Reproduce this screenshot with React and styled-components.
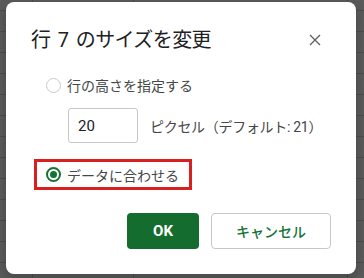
import React, { useState } from 'react';
import styled, { createGlobalStyle } from 'styled-components';

const GlobalStyle = createGlobalStyle`
  html, body {
    margin: 0;
    padding: 0;
  }
  body {
    width: 364px;
    height: 278px;
    overflow: hidden;
    background-color: #5b5b5b;
    background-image:
      linear-gradient(to right, transparent 32px, #4b4b4b 32px, #4b4b4b 33px, transparent 33px),
      linear-gradient(to right, transparent 133px, #4b4b4b 133px, #4b4b4b 134px, transparent 134px),
      linear-gradient(to right, transparent 347px, #4b4b4b 347px, #4b4b4b 348px, transparent 348px),
      repeating-linear-gradient(to bottom, transparent 0, transparent 10px, #4d4d4d 10px, #4d4d4d 11px, transparent 11px, transparent 21px);
    font-family: Roboto, "Noto Sans CJK JP", sans-serif;
  }
`;

const Page = styled.div`
  padding: 2px 8px 0 6px;
`;

const Dialog = styled.div`
  box-sizing: border-box;
  width: 350px;
  height: 272px;
  background: #fff;
  border-radius: 8px;
  padding: 24px 25px 25px 25px;
  display: flex;
  flex-direction: column;
  box-shadow: 0 4px 8px 3px rgba(0, 0, 0, 0.15);
`;

const Header = styled.div`
  display: flex;
  align-items: center;
  justify-content: space-between;
  height: 28px;
`;

const Title = styled.h2`
  margin: 0;
  font-size: 20px;
  font-weight: 400;
  line-height: 28px;
  letter-spacing: -0.6px;
  word-spacing: 3px;
  color: #202124;
  font-family: Roboto, "Noto Sans CJK JP", sans-serif;
`;

const CloseButton = styled.button`
  border: 0;
  background: none;
  padding: 0;
  margin-right: 8px;
  width: 16px;
  height: 16px;
  display: flex;
  align-items: center;
  justify-content: center;
  cursor: pointer;
`;

const Body = styled.div`
  display: flex;
  flex-direction: column;
  margin-top: 21px;
`;

const Option = styled.label`
  display: flex;
  align-items: center;
  gap: 6px;
  height: 20px;
  padding-left: 15px;
  font-size: 14px;
  color: #444746;
  cursor: pointer;
`;

const Highlight = styled.div`
  box-sizing: border-box;
  width: 158px;
  height: 31px;
  margin: 16px 0 0 3px;
  border: 3px solid #d9201f;
  display: flex;
  align-items: center;
  padding-left: 9px;

  & > label {
    padding-left: 0;
  }
`;

const Radio = styled.span`
  box-sizing: border-box;
  width: 15px;
  height: 15px;
  border-radius: 50%;
  border: ${(p) => (p.checked ? '2px solid #137333' : '1.5px solid #c9cbcc')};
  display: flex;
  align-items: center;
  justify-content: center;
  flex-shrink: 0;

  &::after {
    content: '';
    width: 7px;
    height: 7px;
    border-radius: 50%;
    background: #137333;
    display: ${(p) => (p.checked ? 'block' : 'none')};
  }
`;

const SizeRow = styled.div`
  display: flex;
  align-items: center;
  gap: 12px;
  margin: 13px 0 0 37px;
`;

const SizeInput = styled.input`
  box-sizing: border-box;
  width: 70px;
  height: 35px;
  border: 1px solid #c7c7c7;
  border-radius: 3px;
  padding: 0 9px;
  font-family: Roboto, "Noto Sans CJK JP", sans-serif;
  font-size: 15px;
  color: #202124;
  outline: none;
`;

const Hint = styled.span`
  font-size: 14px;
  color: #444746;
  letter-spacing: -0.3px;
`;

const Footer = styled.div`
  margin-top: auto;
  display: flex;
  justify-content: flex-end;
  gap: 12px;
`;

const Button = styled.button`
  box-sizing: border-box;
  height: 36px;
  width: ${(p) => p.width}px;
  border-radius: 4px;
  font-family: Roboto, "Noto Sans CJK JP", sans-serif;
  font-size: ${(p) => (p.primary ? '15px' : '14px')};
  font-weight: ${(p) => (p.primary ? 700 : 500)};
  cursor: pointer;
  border: ${(p) => (p.primary ? '0' : '1px solid #c7c7c7')};
  background: ${(p) => (p.primary ? '#146c2e' : '#fff')};
  color: ${(p) => (p.primary ? '#fff' : '#137333')};
`;

export default function App() {
  const [mode, setMode] = useState('fit');
  const [height, setHeight] = useState('20');

  return (
    <>
      <GlobalStyle />
      <Page>
        <Dialog>
          <Header>
            <Title>行 7 のサイズを変更</Title>
            <CloseButton aria-label="閉じる">
              <svg width="12" height="12" viewBox="0 0 12 12">
                <path d="M1 1L11 11M11 1L1 11" stroke="#5f6368" strokeWidth="1.4" fill="none" />
              </svg>
            </CloseButton>
          </Header>
          <Body>
            <Option onClick={() => setMode('custom')}>
              <Radio checked={mode === 'custom'} />
              行の高さを指定する
            </Option>
            <SizeRow>
              <SizeInput value={height} onChange={(e) => setHeight(e.target.value)} />
              <Hint>ピクセル（デフォルト: 21）</Hint>
            </SizeRow>
            <Highlight>
              <Option onClick={() => setMode('fit')}>
                <Radio checked={mode === 'fit'} />
                データに合わせる
              </Option>
            </Highlight>
          </Body>
          <Footer>
            <Button primary width={72}>OK</Button>
            <Button width={120}>キャンセル</Button>
          </Footer>
        </Dialog>
      </Page>
    </>
  );
}
